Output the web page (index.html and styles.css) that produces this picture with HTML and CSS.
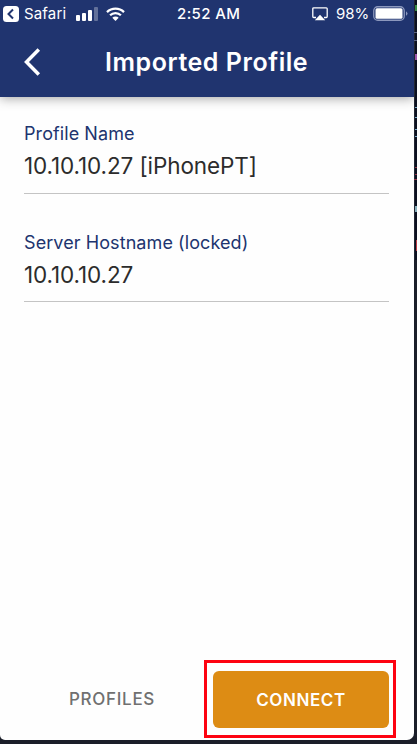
FILE: index.html
```html
<!DOCTYPE html>
<html lang="en">
<head>
<meta charset="utf-8">
<title>Imported Profile</title>
<link rel="stylesheet" href="styles.css">
</head>
<body>
<div class="desktop">
  <main class="phone">
    <header class="header">
      <div class="status">
        <div class="status-left">
          <svg class="back-app" width="16" height="16" viewBox="0 0 16 16"><rect width="16" height="16" rx="3.5" fill="#fff"/><path d="M10 3.5 5.5 8l4.500 4.500" fill="none" stroke="#20346f" stroke-width="2"/></svg>
          <span class="app">Safari</span>
          <svg class="signal" width="22" height="14" viewBox="0 0 22 14" fill="#fff"><rect x="0" y="8" width="4" height="6" rx="1"/><rect x="6" y="6" width="4" height="8" rx="1"/><rect x="12" y="3" width="4" height="11" rx="1"/><rect x="18" y="0" width="4" height="14" rx="1" opacity=".3"/></svg>
          <svg class="wifi" width="19" height="14" viewBox="0 0 19 14"><g fill="none" stroke="#fff" stroke-width="2.300"><path d="M1 5.100a12.200 12.200 0 0 1 17 0"/><path d="M4.100 8.300a7.700 7.700 0 0 1 10.800 0"/></g><path d="M6.300 10.700a4.600 4.600 0 0 1 6.400 0L9.500 14z" fill="#fff"/></svg>
        </div>
        <span class="time">2:52 AM</span>
        <div class="status-right">
          <svg class="airplay" width="16" height="14" viewBox="0 0 16 14"><path d="M4 10.500H1.700A.9.9 0 0 1 .8 9.600V1.700A.9.9 0 0 1 1.700.8h12.600a.9.900 0 0 1 .9.900v7.900a.9.900 0 0 1-.9.900H12" fill="none" stroke="#fff" stroke-width="1.300"/><path d="M8 7.800 13.200 13.300H2.800z" fill="#fff"/></svg>
          <span class="percent">98%</span>
          <svg class="battery" width="35" height="16" viewBox="0 0 35 16"><rect x=".75" y=".75" width="30.500" height="13.500" rx="4" fill="none" stroke="#8c98bd" stroke-width="1.300"/><rect x="2.500" y="2.300" width="27" height="10.500" rx="1.500" fill="#fff"/><path d="M33 5.200q3 2.300 0 4.600z" fill="#8c98bd"/></svg>
        </div>
      </div>
      <div class="navbar">
        <svg class="back" width="18" height="28" viewBox="0 0 18 28"><path d="M15.800 1.500 3.500 14l12.300 12.500" fill="none" stroke="#fff" stroke-width="3.500"/></svg>
        <h1 class="title">Imported Profile</h1>
      </div>
    </header>
    <section class="form">
      <div class="field"><div class="label">Profile Name</div><div class="value">10.10.10.27 [iPhonePT]</div></div>
      <div class="field"><div class="label">Server Hostname (locked)</div><div class="value">10.10.10.27</div></div>
    </section>
    <footer class="actions">
      <button class="profiles">PROFILES</button>
      <div class="highlight"><button class="connect">CONNECT</button></div>
    </footer>
  </main>
  <svg class="wallpaper" width="3" height="744" viewBox="0 0 3 744"><path fill="#0b1020" d="M0 0h3v744H0z"/><path fill="#222633" d="M0 0h1v744H0z"/><path fill="#368943" d="M1 5h2v6H1z"/><path stroke="#596080" d="M0 32.500h3M0 40.500h3"/><path fill="#9c55a9" d="M1 54h2v6H1z"/><path stroke="#78a9c8" d="M1 107.500h2M1 117.500h2M1 129.500h2M1 136.500h2"/><path stroke="#8d3548" d="M1 167.500h2M1 174.500h2M0 179.500h3"/><path fill="#87aebb" d="M1 206h2v6H1z"/><path fill="#b93a43" d="M2 240h1v11H2z"/><path fill="#1b1e29" d="M0 260h3v484H0z"/></svg>
</div>
</body>
</html>
```
FILE: styles.css
```css
* { box-sizing: border-box; }
body { margin: 0; background: #1b1e29; font-family: Inter, "Liberation Sans", sans-serif; }
.desktop { display: flex; width: 417px; height: 744px; overflow: hidden; }
.phone { display: flex; flex-direction: column; width: 414px; height: 740px; background: #fefefe; border-radius: 0 0 7px 5px; overflow: hidden; }
.header { height: 97px; flex: none; background: #20346f; color: #fff; box-shadow: 0 1px 11px rgba(0,0,0,.38); }
.status { display: grid; grid-template-columns: 177px 64px 1fr; height: 27px; align-items: center; }
.status-left, .status-right { display: flex; align-items: center; }
.back-app { margin-left: 3px; }
.app { width: 43px; margin-left: 5px; font-size: 15px; letter-spacing: .15px; white-space: nowrap; }
.signal { margin-left: 9px; }
.wifi { margin-left: 8px; }
.time { font-size: 15px; font-weight: 500; letter-spacing: .4px; white-space: nowrap; }
.airplay { margin-left: 71px; }
.percent { width: 33px; margin-left: 8px; font-size: 15px; white-space: nowrap; }
.battery { margin-left: 4px; flex: none; }
.navbar { display: flex; align-items: center; height: 70px; }
.back { margin-left: 23px; }
.title { margin: 0 0 0 64px; font-size: 25px; line-height: 30px; font-weight: 600; letter-spacing: .55px; white-space: nowrap; }
.form { padding: 26px 25px 0 24px; }
.field { height: 70.500px; margin-bottom: 38px; border-bottom: 1px solid #c4c4c4; }
.label { color: #20346f; font-size: 18px; line-height: 22px; letter-spacing: .08px; white-space: nowrap; }
.value { margin-top: 7px; color: #2c2c2c; font-size: 22.500px; line-height: 28px; letter-spacing: -.1px; white-space: nowrap; }
.actions { display: flex; align-items: center; height: 78px; margin: auto 18px 2px 20px; }
button { border: 0; padding: 0; font-family: inherit; font-size: 17px; font-weight: 500; letter-spacing: .7px; }
.profiles { width: 184px; height: 57px; background: none; color: #707070; }
.highlight { width: 192px; height: 78px; padding: 8px 4px 7px 6px; border: 3px solid #fd0310; }
.connect { display: block; width: 176px; height: 57px; border-radius: 6px; background: #dd8c14; color: #fff; font-weight: 600; letter-spacing: .6px; }
```
